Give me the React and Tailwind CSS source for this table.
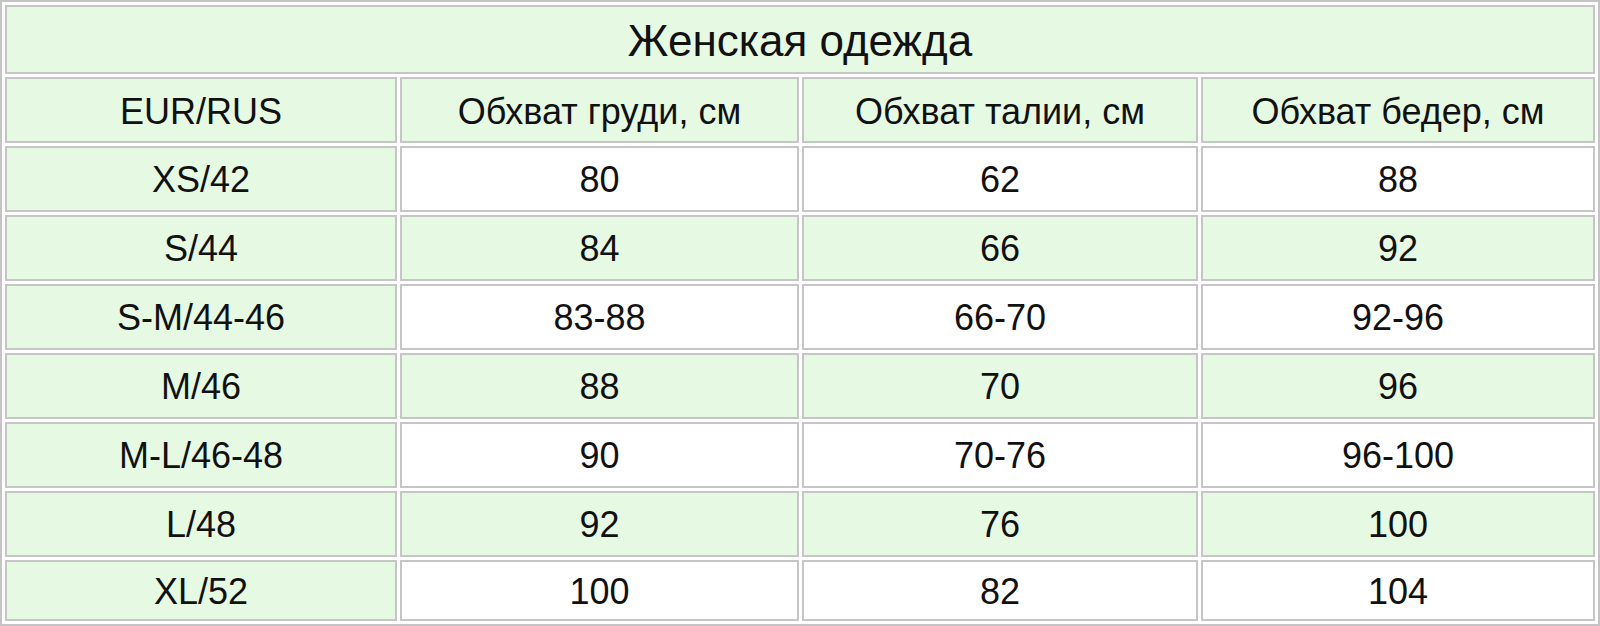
import React from 'react';

const rows = [
  ['XS/42', '80', '62', '88'],
  ['S/44', '84', '66', '92'],
  ['S-M/44-46', '83-88', '66-70', '92-96'],
  ['M/46', '88', '70', '96'],
  ['M-L/46-48', '90', '70-76', '96-100'],
  ['L/48', '92', '76', '100'],
  ['XL/52', '100', '82', '104'],
];

const headers = ['EUR/RUS', 'Обхват груди, см', 'Обхват талии, см', 'Обхват бедер, см'];

export default function App() {
  return (
    <div className="w-[1600px] h-[626px] bg-white font-['Liberation_Sans',Arial,sans-serif] text-[#111]">
      <table className="w-full table-fixed border-separate border-spacing-[3px] border-2 border-[#c4c4c4]">
        <colgroup>
          <col className="w-[392px]" />
          <col className="w-[399px]" />
          <col className="w-[396px]" />
          <col className="w-[394px]" />
        </colgroup>
        <tbody>
          <tr className="h-[69px]">
            <td colSpan={4} className="p-0 pt-[3px] border-2 border-[#c6c6c6] bg-[#e6f9e3] text-center text-[44px] leading-none">
              Женская одежда
            </td>
          </tr>
          <tr className="h-[66px]">
            {headers.map((h) => (
              <td key={h} className="p-0 pt-[3px] border-2 border-[#c6c6c6] bg-[#e6f9e3] text-center text-[36px] leading-none">
                {h}
              </td>
            ))}
          </tr>
          {rows.map((row, i) => (
            <tr key={row[0]} className={i === rows.length - 1 ? 'h-[61px]' : 'h-[66px]'}>
              {row.map((cell, j) => {
                // first column always green, odd rows green across
                const green = j === 0 || i % 2 === 1;
                return (
                  <td
                    key={j}
                    className={
                      green
                        ? 'p-0 pt-[2px] border-2 border-[#c6c6c6] bg-[#e6f9e3] text-center text-[36px] leading-none'
                        : 'p-0 pt-[2px] border-2 border-[#c6c6c6] bg-white text-center text-[36px] leading-none'
                    }
                  >
                    {cell}
                  </td>
                );
              })}
            </tr>
          ))}
        </tbody>
      </table>
    </div>
  );
}
